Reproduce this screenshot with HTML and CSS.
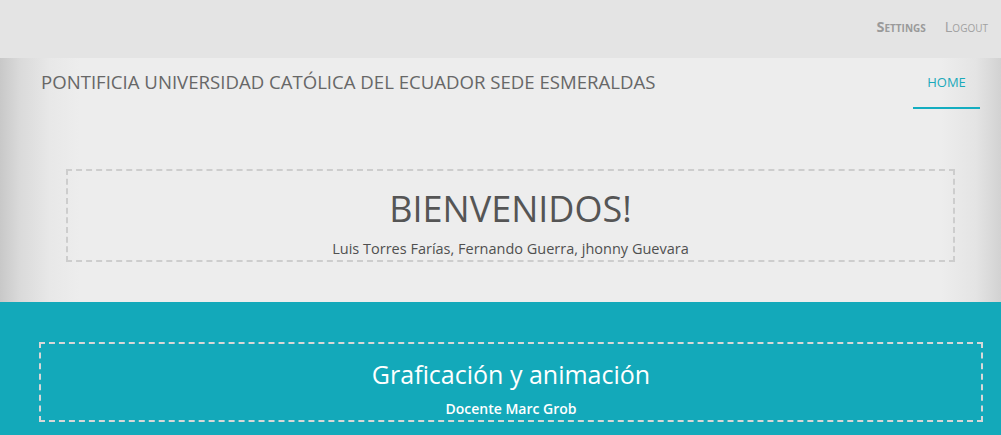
FILE: index.html
```html
<!DOCTYPE html>
<html lang="es">
<head>
<meta charset="utf-8">
<title>PUCESE</title>
<link rel="stylesheet" href="styles.css">
</head>
<body>
<div class="topbar">
  <a class="top-link strong" href="#">Settings</a>
  <a class="top-link" href="#">Logout</a>
</div>
<header class="header">
  <div class="nav">
    <div class="brand">PONTIFICIA UNIVERSIDAD CATÓLICA DEL ECUADOR SEDE ESMERALDAS</div>
    <a class="home" href="#">HOME</a>
  </div>
  <div class="welcome">
    <h1 class="welcome-title">BIENVENIDOS!</h1>
    <p class="welcome-sub">Luis Torres Farías, Fernando Guerra, jhonny Guevara</p>
  </div>
</header>
<section class="course">
  <div class="course-box">
    <h2 class="course-title">Graficación y animación</h2>
    <p class="course-sub">Docente Marc Grob</p>
  </div>
</section>
</body>
</html>
```
FILE: styles.css
```css
* { box-sizing: border-box; }
html, body { margin: 0; padding: 0; }
body {
  font-family: "Open Sans", "DejaVu Sans", sans-serif;
  background: #13a9ba;
  overflow: hidden;
}
a { text-decoration: none; }

.topbar {
  height: 58px;
  background: #e4e4e4;
  display: flex;
  justify-content: flex-end;
  align-items: center;
  gap: 19px;
  padding: 0 13px 6px 0;
}
.top-link {
  font-variant: small-caps;
  font-size: 14.5px;
  color: #a0a0a0;
  letter-spacing: 0;
}
.top-link.strong { font-weight: 700; color: #9a9a9a; }

.header {
  height: 244px;
  background: linear-gradient(to right, #c8c8c8 0, #dadada 20px, #e8e8e8 50px, #ededed 80px, #ededed calc(100% - 60px), #e4e4e4 calc(100% - 25px), #d2d2d2 100%);
  padding: 0 21px 0 41px;
}
.nav {
  display: flex;
  justify-content: space-between;
  align-items: flex-start;
  height: 111px;
}
.brand {
  font-size: 18.6px;
  color: #676767;
  padding-top: 11px;
  letter-spacing: 0;
}
.home {
  display: block;
  width: 67px;
  text-align: center;
  font-size: 13px;
  color: #1aa9ba;
  padding-top: 15px;
  height: 51px;
  border-bottom: 2px solid #14adc0;
}
.welcome {
  margin: 0 25px 0 25px;
  border: 2px dashed #cdcdcd;
  height: 93px;
  text-align: center;
  padding-top: 14px;
}
.welcome-title {
  margin: 0;
  font-weight: 400;
  font-size: 36px;
  line-height: 48px;
  color: #555555;
}
.welcome-sub {
  margin: 6px 0 0;
  font-size: 14.5px;
  line-height: 19px;
  color: #505050;
}

.course {
  height: 133px;
  padding: 40px 18px 0 39px;
}
.course-box {
  border: 2px dashed #d8d8d8;
  height: 80px;
  text-align: center;
  padding-top: 13px;
}
.course-title {
  margin: 0;
  font-weight: 400;
  font-size: 25px;
  line-height: 34px;
  color: #ffffff;
}
.course-sub {
  margin: 9px 0 0;
  font-size: 14px;
  font-weight: 600;
  line-height: 18px;
  color: #ffffff;
}
```
